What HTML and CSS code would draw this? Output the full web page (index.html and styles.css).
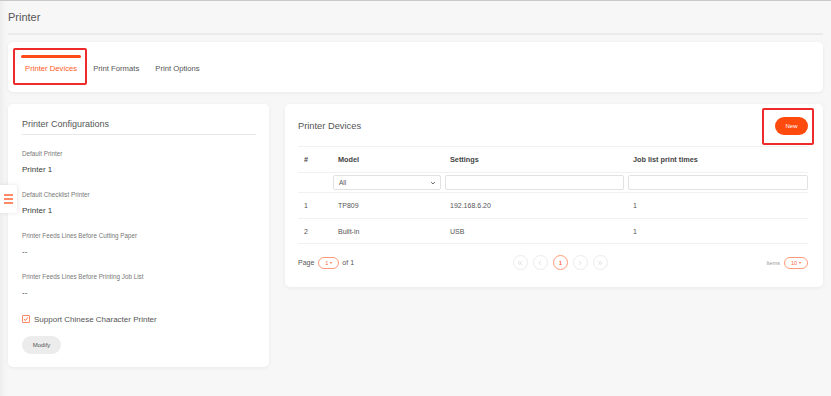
FILE: index.html
```html
<!DOCTYPE html>
<html>
<head>
<meta charset="utf-8">
<title>Printer</title>
<link rel="stylesheet" href="styles.css">
</head>
<body>
<div class="page">
  <div class="page-header"><h1 class="page-title">Printer</h1></div>

  <div class="card tabs-card">
    <div class="tabs">
      <div class="tab active">Printer Devices</div>
      <div class="tab">Print Formats</div>
      <div class="tab">Print Options</div>
    </div>
    <div class="mark mark-tab"></div>
  </div>

  <div class="content">
    <section class="card config-card">
      <h2 class="cfg-title">Printer Configurations</h2>
      <div class="field">
        <div class="field-label">Default Printer</div>
        <div class="field-value">Printer 1</div>
      </div>
      <div class="field">
        <div class="field-label">Default Checklist Printer</div>
        <div class="field-value">Printer 1</div>
      </div>
      <div class="field">
        <div class="field-label">Printer Feeds Lines Before Cutting Paper</div>
        <div class="field-value">--</div>
      </div>
      <div class="field">
        <div class="field-label">Printer Feeds Lines Before Printing Job List</div>
        <div class="field-value">--</div>
      </div>
      <div class="check-row">
        <span class="checkbox"><svg viewBox="0 0 8 8" width="6" height="6"><polyline points="1.2,4.2 3.2,6 6.8,1.8" fill="none" stroke="#ff6a3d" stroke-width="1.3"/></svg></span>
        <span class="check-label">Support Chinese Character Printer</span>
      </div>
      <button class="btn-modify">Modify</button>
    </section>

    <section class="card devices-card">
      <div class="dev-header">
        <h2 class="dev-title">Printer Devices</h2>
        <button class="btn-new">New</button>
      </div>
      <div class="mark mark-new"></div>

      <div class="grid-table">
        <div class="row head">
          <div class="cell c-num">#</div>
          <div class="cell">Model</div>
          <div class="cell">Settings</div>
          <div class="cell">Job list print times</div>
        </div>
        <div class="row filter">
          <div class="cell"></div>
          <div class="cell f-cell"><div class="select">All<svg viewBox="0 0 8 8" width="6" height="6"><polyline points="1.5,2.8 4,5.2 6.5,2.8" fill="none" stroke="#444" stroke-width="1.1"/></svg></div></div>
          <div class="cell f-cell"><div class="input"></div></div>
          <div class="cell f-cell last"><div class="input"></div></div>
        </div>
        <div class="row body-row">
          <div class="cell c-num">1</div>
          <div class="cell">TP809</div>
          <div class="cell">192.168.6.20</div>
          <div class="cell">1</div>
        </div>
        <div class="row body-row r2">
          <div class="cell c-num">2</div>
          <div class="cell">Built-in</div>
          <div class="cell">USB</div>
          <div class="cell">1</div>
        </div>
      </div>

      <div class="pager">
        <div class="pager-info">
          <span>Page</span>
          <span class="pill">1<i class="caret"></i></span>
          <span>of 1</span>
        </div>
        <div class="pager-nav">
          <span class="circle"><svg viewBox="0 0 8 8" width="6" height="6"><polyline points="4,1.5 1.6,4 4,6.5" fill="none" stroke="#d8d8d8" stroke-width="1"/><polyline points="6.6,1.5 4.2,4 6.6,6.5" fill="none" stroke="#d8d8d8" stroke-width="1"/></svg></span>
          <span class="circle"><svg viewBox="0 0 8 8" width="6" height="6"><polyline points="5.2,1.5 2.8,4 5.2,6.5" fill="none" stroke="#d8d8d8" stroke-width="1"/></svg></span>
          <span class="circle active">1</span>
          <span class="circle"><svg viewBox="0 0 8 8" width="6" height="6"><polyline points="2.8,1.5 5.2,4 2.8,6.5" fill="none" stroke="#d8d8d8" stroke-width="1"/></svg></span>
          <span class="circle"><svg viewBox="0 0 8 8" width="6" height="6"><polyline points="1.4,1.5 3.8,4 1.4,6.5" fill="none" stroke="#d8d8d8" stroke-width="1"/><polyline points="4,1.5 6.4,4 4,6.5" fill="none" stroke="#d8d8d8" stroke-width="1"/></svg></span>
        </div>
        <div class="pager-size">
          <span class="items">Items</span>
          <span class="pill pill-wide">10<i class="caret"></i></span>
        </div>
      </div>
    </section>
  </div>
</div>

<div class="side-toggle"><span></span><span></span><span></span></div>
</body>
</html>
```

FILE: styles.css
```css
* { box-sizing: border-box; }
html, body { margin: 0; padding: 0; }
body {
  background: #f7f7f7;
  font-family: "Liberation Sans", Arial, sans-serif;
  color: #555;
  width: 831px;
  height: 396px;
  overflow: hidden;
  border-top: 1px solid #c9c9c9;
  box-shadow: inset 7px 0 7px -6px rgba(0,0,0,0.07);
  position: relative;
}
.page { padding: 0 8px; }

.page-header {
  height: 34px;
  border-bottom: 2px solid #ebebeb;
  display: flex;
  align-items: center;
}
.page-title {
  margin: 0;
  font-size: 11px;
  font-weight: normal;
  color: #555;
  line-height: 14px;
}

.card {
  background: #fff;
  border-radius: 5px;
  box-shadow: 0 1px 4px rgba(0,0,0,0.06);
  position: relative;
}

.tabs-card {
  margin-top: 7px;
  height: 50px;
  padding-left: 9px;
}
.tabs { display: flex; }
.tab {
  position: relative;
  padding: 22px 8px 0;
  font-size: 7.7px;
  line-height: 10px;
  color: #555;
}
.tab.active { color: #ff5a26; }
.tab.active::before {
  content: "";
  position: absolute;
  top: 13px;
  left: 4px;
  right: 4px;
  height: 2.5px;
  border-radius: 2px;
  background: #ff4a1a;
}

.mark {
  position: absolute;
  border: 2px solid #ee2a2a;
  border-radius: 2px;
}
.mark-tab { left: 5px; top: 6px; width: 74px; height: 37px; }
.mark-new { right: 9px; top: 4px; width: 52px; height: 37px; }

.content {
  margin-top: 12px;
  display: flex;
  gap: 16px;
  align-items: flex-start;
}

.config-card {
  width: 261px;
  padding: 14px 13px 13px 14px;
}
.cfg-title {
  margin: 0;
  font-size: 9px;
  line-height: 12px;
  font-weight: normal;
  color: #555;
  padding-bottom: 4px;
  border-bottom: 1px solid #e8e8e8;
  margin-bottom: 14px;
}
.field { margin-bottom: 14px; }
.field:last-of-type { margin-bottom: 13px; }
.field-label {
  font-size: 6.3px;
  line-height: 10px;
  color: #777;
}
.field-value {
  margin-top: 5px;
  font-size: 8px;
  line-height: 12px;
  color: #3a3a3a;
}
.check-row {
  margin-top: 3px;
  display: flex;
  align-items: center;
  height: 12px;
}
.checkbox {
  width: 8px;
  height: 8px;
  border: 1px solid #ff8a65;
  border-radius: 1px;
  display: flex;
  align-items: center;
  justify-content: center;
  background: #fff;
}
.check-label {
  margin-left: 4px;
  font-size: 8px;
  color: #555;
}
.btn-modify {
  margin-top: 11px;
  display: block;
  width: 39px;
  height: 18px;
  border: none;
  border-radius: 9px;
  background: #ececec;
  font-family: inherit;
  font-size: 6px;
  color: #555;
  padding: 0;
}

.devices-card {
  flex: 1;
  padding: 13px 15px 16px 13px;
}
.dev-header {
  display: flex;
  justify-content: space-between;
  align-items: center;
  height: 18px;
  margin-bottom: 11px;
}
.dev-title {
  margin: 0;
  font-size: 9.3px;
  font-weight: normal;
  color: #555;
}
.btn-new {
  width: 33px;
  height: 18px;
  border: none;
  border-radius: 9px;
  background: #ff4a0e;
  color: #fff;
  font-family: inherit;
  font-size: 6px;
  padding: 0;
}

.grid-table { border-top: 1px solid #f1f1f1; }
.row {
  display: grid;
  grid-template-columns: 35px 112px 183px 1fr;
  align-items: center;
  border-bottom: 1px solid #f1f1f1;
}
.row.head { height: 26px; }
.row.filter { height: 20px; }
.row.body-row { height: 26px; }
.row.body-row.r2 { height: 25px; }
.cell {
  padding-left: 5px;
  font-size: 7px;
  color: #555;
}
.cell.c-num { padding-left: 6px; }
.row.head .cell {
  font-weight: bold;
  font-size: 7.3px;
  color: #444;
}
.cell.f-cell { padding: 0 4px 0 0; }
.cell.f-cell.last { padding: 0; }
.select, .input {
  height: 15px;
  border: 1px solid #e2e2e2;
  border-radius: 2px;
  background: #fff;
}
.select {
  display: flex;
  align-items: center;
  justify-content: space-between;
  padding: 0 4px 0 5px;
  font-size: 6.5px;
  color: #555;
}

.pager {
  margin-top: 10px;
  height: 17px;
  display: flex;
  justify-content: space-between;
  align-items: center;
}
.pager-info {
  display: flex;
  align-items: center;
  font-size: 7px;
  color: #555;
}
.pill {
  display: inline-flex;
  align-items: center;
  justify-content: center;
  gap: 2px;
  width: 21px;
  height: 12px;
  border: 1px solid #ff9a78;
  border-radius: 6px;
  font-size: 5.5px;
  color: #ff6a3d;
  margin: 0 3px 0 4px;
}
.pill-wide { width: 24px; margin: 0; }
.caret {
  width: 0;
  height: 0;
  border-left: 1.5px solid transparent;
  border-right: 1.5px solid transparent;
  border-top: 2px solid #ff6a3d;
}
.pager-nav { display: flex; gap: 5px; }
.circle {
  width: 15px;
  height: 15px;
  border: 1px solid #ececec;
  border-radius: 50%;
  display: flex;
  align-items: center;
  justify-content: center;
  font-size: 6px;
}
.circle.active {
  border-color: #ff9a78;
  color: #ff6a3d;
  font-weight: bold;
}
.pager-size { display: flex; align-items: center; }
.items {
  font-size: 5.5px;
  color: #999;
  margin-right: 4px;
}

.side-toggle {
  position: absolute;
  left: 0;
  top: 184px;
  width: 17px;
  height: 28px;
  background: #fff;
  border-radius: 0 3px 3px 0;
  box-shadow: 1px 0 4px rgba(0,0,0,0.1);
  display: flex;
  flex-direction: column;
  justify-content: center;
  gap: 2.6px;
  padding-left: 4px;
}
.side-toggle span {
  display: block;
  width: 9px;
  height: 1.4px;
  background: #ff8a65;
}
```
